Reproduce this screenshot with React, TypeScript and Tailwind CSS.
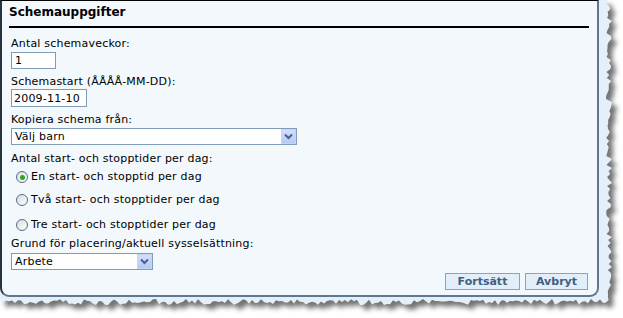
import React from 'react';

function seeded(seed: number) {
  let s = seed;
  return () => {
    s = (s * 16807) % 2147483647;
    return (s - 1) / 2147483646;
  };
}

function TornPaper() {
  const r = seeded(42);
  const pts: string[] = ['0,0', '608,0'];
  for (let y = 3; y <= 300; y += 3) pts.push(`${(606 + r() * 6).toFixed(1)},${y}`);
  for (let x = 606; x >= 0; x -= 3) pts.push(`${x},${(299 + r() * 6).toFixed(1)}`);
  const poly = pts.join(' ');
  return (
    <svg className="absolute inset-0" width={623} height={318}>
      <defs>
        <filter id="sh" x="-5%" y="-5%" width="110%" height="110%">
          <feGaussianBlur stdDeviation="2.5" />
        </filter>
      </defs>
      <polygon points={poly} transform="translate(5,5)" fill="#444" opacity={0.75} filter="url(#sh)" />
      <polygon points={poly} fill="#e4eff9" />
    </svg>
  );
}

function Select({ width, text }: { width: string; text: string }) {
  return (
    <div className={`${width} h-[17px] mt-[1px] flex items-center bg-white border border-[#7f9db9]`}>
      <span className="flex-1 pl-[3px] leading-[14px]">{text}</span>
      <span className="w-[15px] h-[15px] flex items-center justify-center bg-gradient-to-b from-[#d3defc] to-[#b7c8f5] border border-[#c5d3f7]">
        <svg width="9" height="7" viewBox="0 0 9 7">
          <path d="M1 1.5 L4.5 5 L8 1.5" fill="none" stroke="#4d6185" strokeWidth="2" />
        </svg>
      </span>
    </div>
  );
}

function Radio({ label, checked, h }: { label: string; checked?: boolean; h: string }) {
  return (
    <div className={`${h} flex items-center pl-[5px] gap-[3px]`}>
      <span className="w-[12px] h-[12px] rounded-full border border-[#4e6f8e] bg-gradient-to-br from-[#dcdcd6] to-white flex items-center justify-center">
        {checked && <span className="w-[5px] h-[5px] rounded-full bg-[#2fa42f]" />}
      </span>
      <span className="leading-[14px]">{label}</span>
    </div>
  );
}

export default function App() {
  return (
    <div className="relative w-[623px] h-[318px] bg-white overflow-hidden font-['DejaVu_Sans',sans-serif] text-[11px] text-black">
      <TornPaper />
      <div className="relative w-[599px] h-[297px] bg-[#f3f8fd] border-t border-t-black border-l-2 border-l-[#28333e] border-r-2 border-r-[#5d7891] border-b-2 border-b-[#5d7891] rounded-bl-[9px] rounded-br-[9px]">
        <div className="h-[25px] pt-[3px] pl-[7px] text-[12px] font-bold leading-[16px]">Schemauppgifter</div>
        <div className="ml-[7px] w-[580px] h-[2px] bg-black" />

        <div className="pl-[9px] flex flex-col tracking-[0.2px]">
          <div className="mt-[9px] leading-[14px]">Antal schemaveckor:</div>
          <input
            defaultValue="1"
            className="mt-[1px] w-[45px] h-[17px] px-[3px] bg-white border border-[#7f9db9] outline-none"
          />
          <div className="mt-[6px] leading-[14px]">Schemastart (ÅÅÅÅ-MM-DD):</div>
          <input
            defaultValue="2009-11-10"
            className="w-[76px] h-[18px] px-[2px] bg-white border border-[#7f9db9] outline-none"
          />
          <div className="mt-[6px] leading-[14px]">Kopiera schema från:</div>
          <Select width="w-[286px]" text="Välj barn" />
          <div className="mt-[7px] leading-[14px]">Antal start- och stopptider per dag:</div>
          <Radio h="h-[22px]" label="En start- och stopptid per dag" checked />
          <Radio h="h-[24px]" label="Två start- och stopptider per dag" />
          <Radio h="h-[25px]" label="Tre start- och stopptider per dag" />
          <div className="leading-[14px]">Grund för placering/aktuell sysselsättning:</div>
          <div className="mt-[1px]">
            <Select width="w-[142px]" text="Arbete" />
          </div>
          <div className="mt-[3px] pr-[9px] flex justify-end gap-[5px] tracking-normal">
            <button className="w-[75px] h-[17px] bg-[#e2eefa] border border-[#8aa4bd] text-[#3f5f80] font-bold leading-[14px]">
              Fortsätt
            </button>
            <button className="w-[63px] h-[17px] bg-[#e2eefa] border border-[#8aa4bd] text-[#3f5f80] font-bold leading-[14px]">
              Avbryt
            </button>
          </div>
        </div>
      </div>
    </div>
  );
}
